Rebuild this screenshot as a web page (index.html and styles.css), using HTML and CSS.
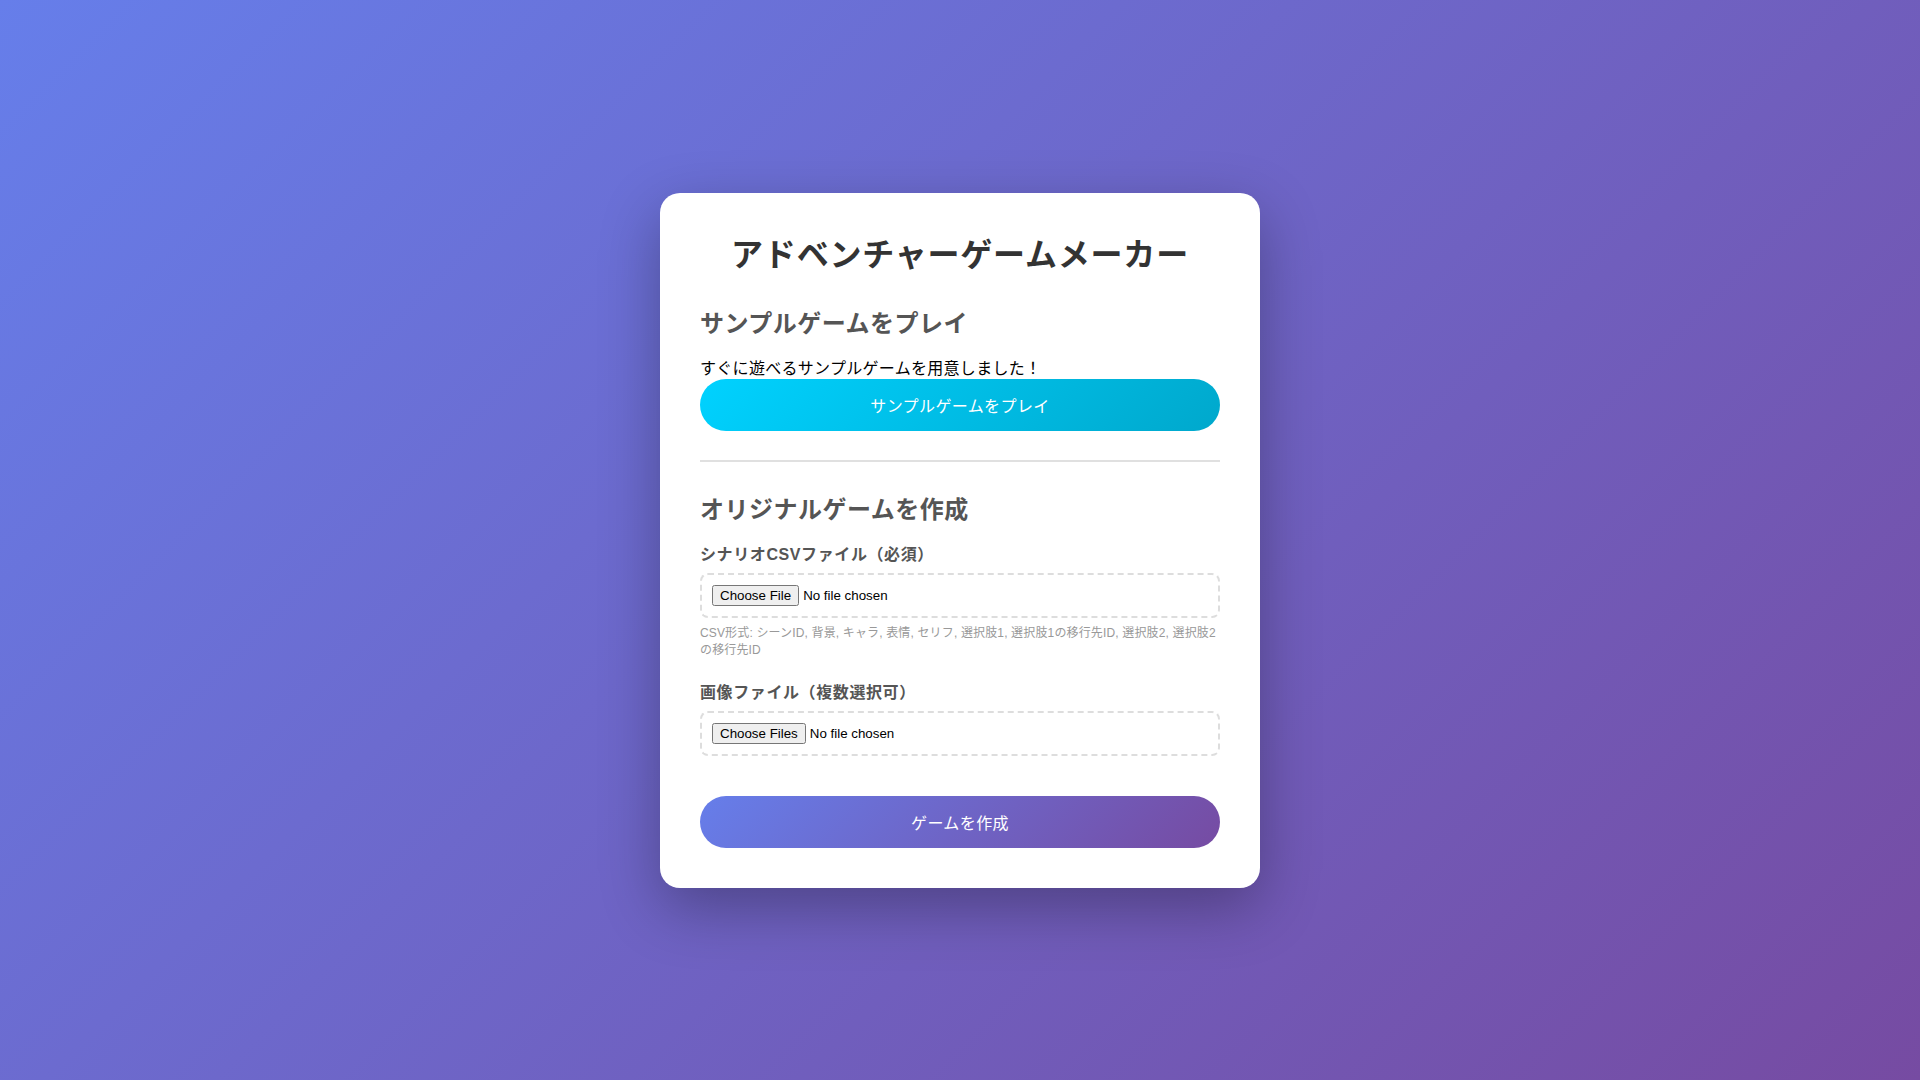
FILE: index.html
```html
<!DOCTYPE html>
<html lang="ja">
<head>
<meta charset="UTF-8">
<title>アドベンチャーゲームメーカー</title>
<link rel="stylesheet" href="styles.css">
</head>
<body>
<div class="container">
  <h1>アドベンチャーゲームメーカー</h1>

  <div class="section">
    <h2>サンプルゲームをプレイ</h2>
    <p>すぐに遊べるサンプルゲームを用意しました！</p>
    <button class="btn btn-sample">サンプルゲームをプレイ</button>
  </div>

  <hr class="divider">

  <div class="section">
    <h2>オリジナルゲームを作成</h2>
    <div class="form-group">
      <label>シナリオCSVファイル（必須）</label>
      <input type="file" accept=".csv">
      <div class="hint">CSV形式: シーンID, 背景, キャラ, 表情, セリフ, 選択肢1, 選択肢1の移行先ID, 選択肢2, 選択肢2の移行先ID</div>
    </div>
    <div class="form-group">
      <label>画像ファイル（複数選択可）</label>
      <input type="file" multiple accept="image/*">
    </div>
    <button class="btn btn-create">ゲームを作成</button>
  </div>
</div>
</body>
</html>
```

FILE: styles.css
```css
* {
  margin: 0;
  padding: 0;
  box-sizing: border-box;
}

body {
  font-family: "Liberation Sans", Arial, "Noto Sans CJK JP", sans-serif;
  background: linear-gradient(135deg, #667eea 0%, #764ba2 100%);
  min-height: 100vh;
  display: flex;
  align-items: center;
  justify-content: center;
}

.container {
  background: #fff;
  border-radius: 20px;
  padding: 40px;
  width: 600px;
  box-shadow: 0 20px 60px rgba(0, 0, 0, 0.3);
}

h1 {
  text-align: center;
  color: #333;
  font-size: 32px;
  line-height: 44px;
  letter-spacing: 0.8px;
  margin-bottom: 27px;
}

h2 {
  color: #555;
  font-size: 24px;
  letter-spacing: 0.5px;
  margin-bottom: 16px;
}

p {
  color: #000;
  font-size: 16px;
  letter-spacing: 0.3px;
}

.divider {
  border: none;
  height: 2px;
  background: #e0e0e0;
  margin: 29px 0 28px;
}

.form-group {
  margin-bottom: 22px;
}

label {
  display: block;
  color: #555;
  font-weight: bold;
  font-size: 16px;
  letter-spacing: 0.6px;
  margin-bottom: 8px;
}

input[type="file"] {
  display: block;
  width: 100%;
  padding: 10px;
  border: 2px dashed #ddd;
  border-radius: 8px;
  font-family: "Liberation Sans", Arial, sans-serif;
  font-size: 13.333px;
}

.hint {
  margin-top: 5px;
  font-size: 12px;
  letter-spacing: 0.15px;
  color: #999;
}

.btn {
  display: block;
  width: 100%;
  border: none;
  border-radius: 50px;
  color: #fff;
  font-family: "Liberation Sans", Arial, "Noto Sans CJK JP", sans-serif;
  font-size: 16px;
  letter-spacing: 0.4px;
  padding: 14px 30px;
  cursor: pointer;
}

.btn-sample {
  background: linear-gradient(135deg, #00d2ff 0%, #00a8cc 100%);
}

.btn-create {
  margin-top: 40px;
  background: linear-gradient(135deg, #667eea 0%, #764ba2 100%);
}
```
